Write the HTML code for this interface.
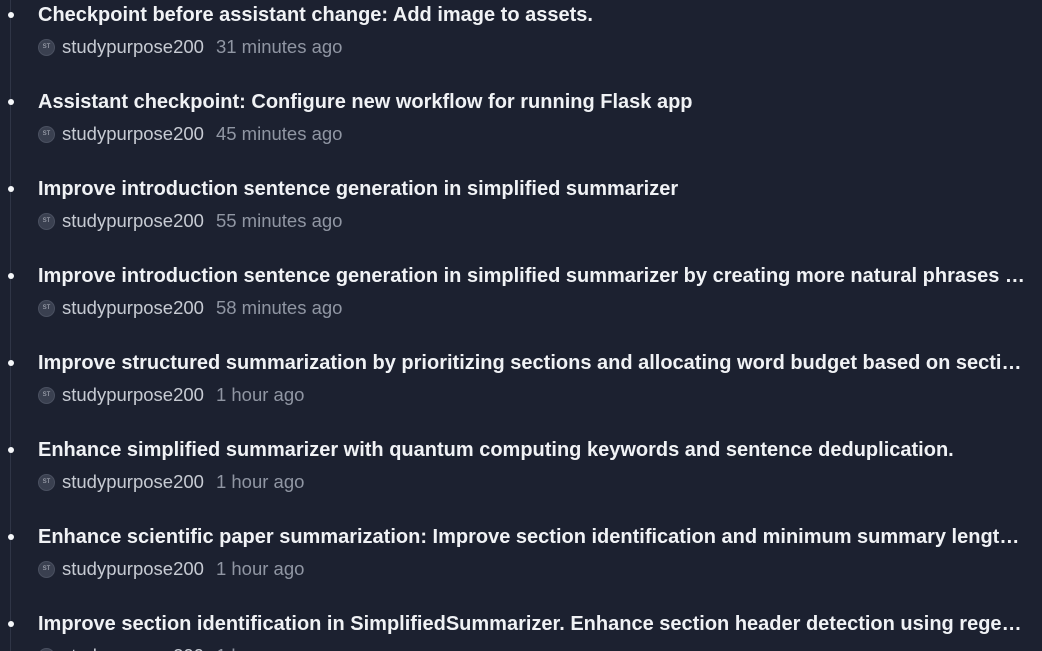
<!DOCTYPE html>
<html><head><meta charset="utf-8"><style>
html,body{margin:0;padding:0;background:#1c2130;width:1042px;height:651px;overflow:hidden;font-family:"Liberation Sans",sans-serif;position:relative}
.line{position:absolute;left:10px;top:0;width:1px;height:651px;background:#2f3546}
.item{position:absolute;left:0;width:1042px;height:87px}
.dot{position:absolute;left:8px;top:10px;width:6px;height:6px;border-radius:50%;background:#f5f7fa}
.t{position:absolute;left:38px;top:1px;width:987px;font-size:20px;font-weight:bold;color:#f0f2f5;white-space:nowrap;overflow:hidden;text-overflow:ellipsis;line-height:24px}
.m{position:absolute;left:38px;top:34px;font-size:18.5px;color:#c7cbd3;line-height:22px;white-space:nowrap}
.av{display:inline-block;width:15px;height:15px;border-radius:50%;background:#3a4050;border:1px solid #4a5060;color:#b8bcc6;font-size:6px;text-align:center;line-height:15px;vertical-align:top;margin-top:3px;margin-right:7px}
.time{color:#9096a3;margin-left:12px}
</style></head><body>
<div class="line"></div>
<div class="item" style="top:2px"><div class="dot"></div><div class="t">Checkpoint before assistant change: Add image to assets.</div><div class="m"><span class="av">ST</span>studypurpose200<span class="time">31 minutes ago</span></div></div>
<div class="item" style="top:89px"><div class="dot"></div><div class="t">Assistant checkpoint: Configure new workflow for running Flask app</div><div class="m"><span class="av">ST</span>studypurpose200<span class="time">45 minutes ago</span></div></div>
<div class="item" style="top:176px"><div class="dot"></div><div class="t">Improve introduction sentence generation in simplified summarizer</div><div class="m"><span class="av">ST</span>studypurpose200<span class="time">55 minutes ago</span></div></div>
<div class="item" style="top:263px"><div class="dot"></div><div class="t">Improve introduction sentence generation in simplified summarizer by creating more natural phrases and avoiding repetition</div><div class="m"><span class="av">ST</span>studypurpose200<span class="time">58 minutes ago</span></div></div>
<div class="item" style="top:350px"><div class="dot"></div><div class="t">Improve structured summarization by prioritizing sections and allocating word budget based on section importance</div><div class="m"><span class="av">ST</span>studypurpose200<span class="time">1 hour ago</span></div></div>
<div class="item" style="top:437px"><div class="dot"></div><div class="t">Enhance simplified summarizer with quantum computing keywords and sentence deduplication.</div><div class="m"><span class="av">ST</span>studypurpose200<span class="time">1 hour ago</span></div></div>
<div class="item" style="top:524px"><div class="dot"></div><div class="t">Enhance scientific paper summarization: Improve section identification and minimum summary length handling</div><div class="m"><span class="av">ST</span>studypurpose200<span class="time">1 hour ago</span></div></div>
<div class="item" style="top:611px;height:40px;overflow:hidden"><div class="dot"></div><div class="t">Improve section identification in SimplifiedSummarizer. Enhance section header detection using regex patterns</div><div class="m"><span class="av">ST</span>studypurpose200<span class="time">1 hour ago</span></div></div>
</body></html>
